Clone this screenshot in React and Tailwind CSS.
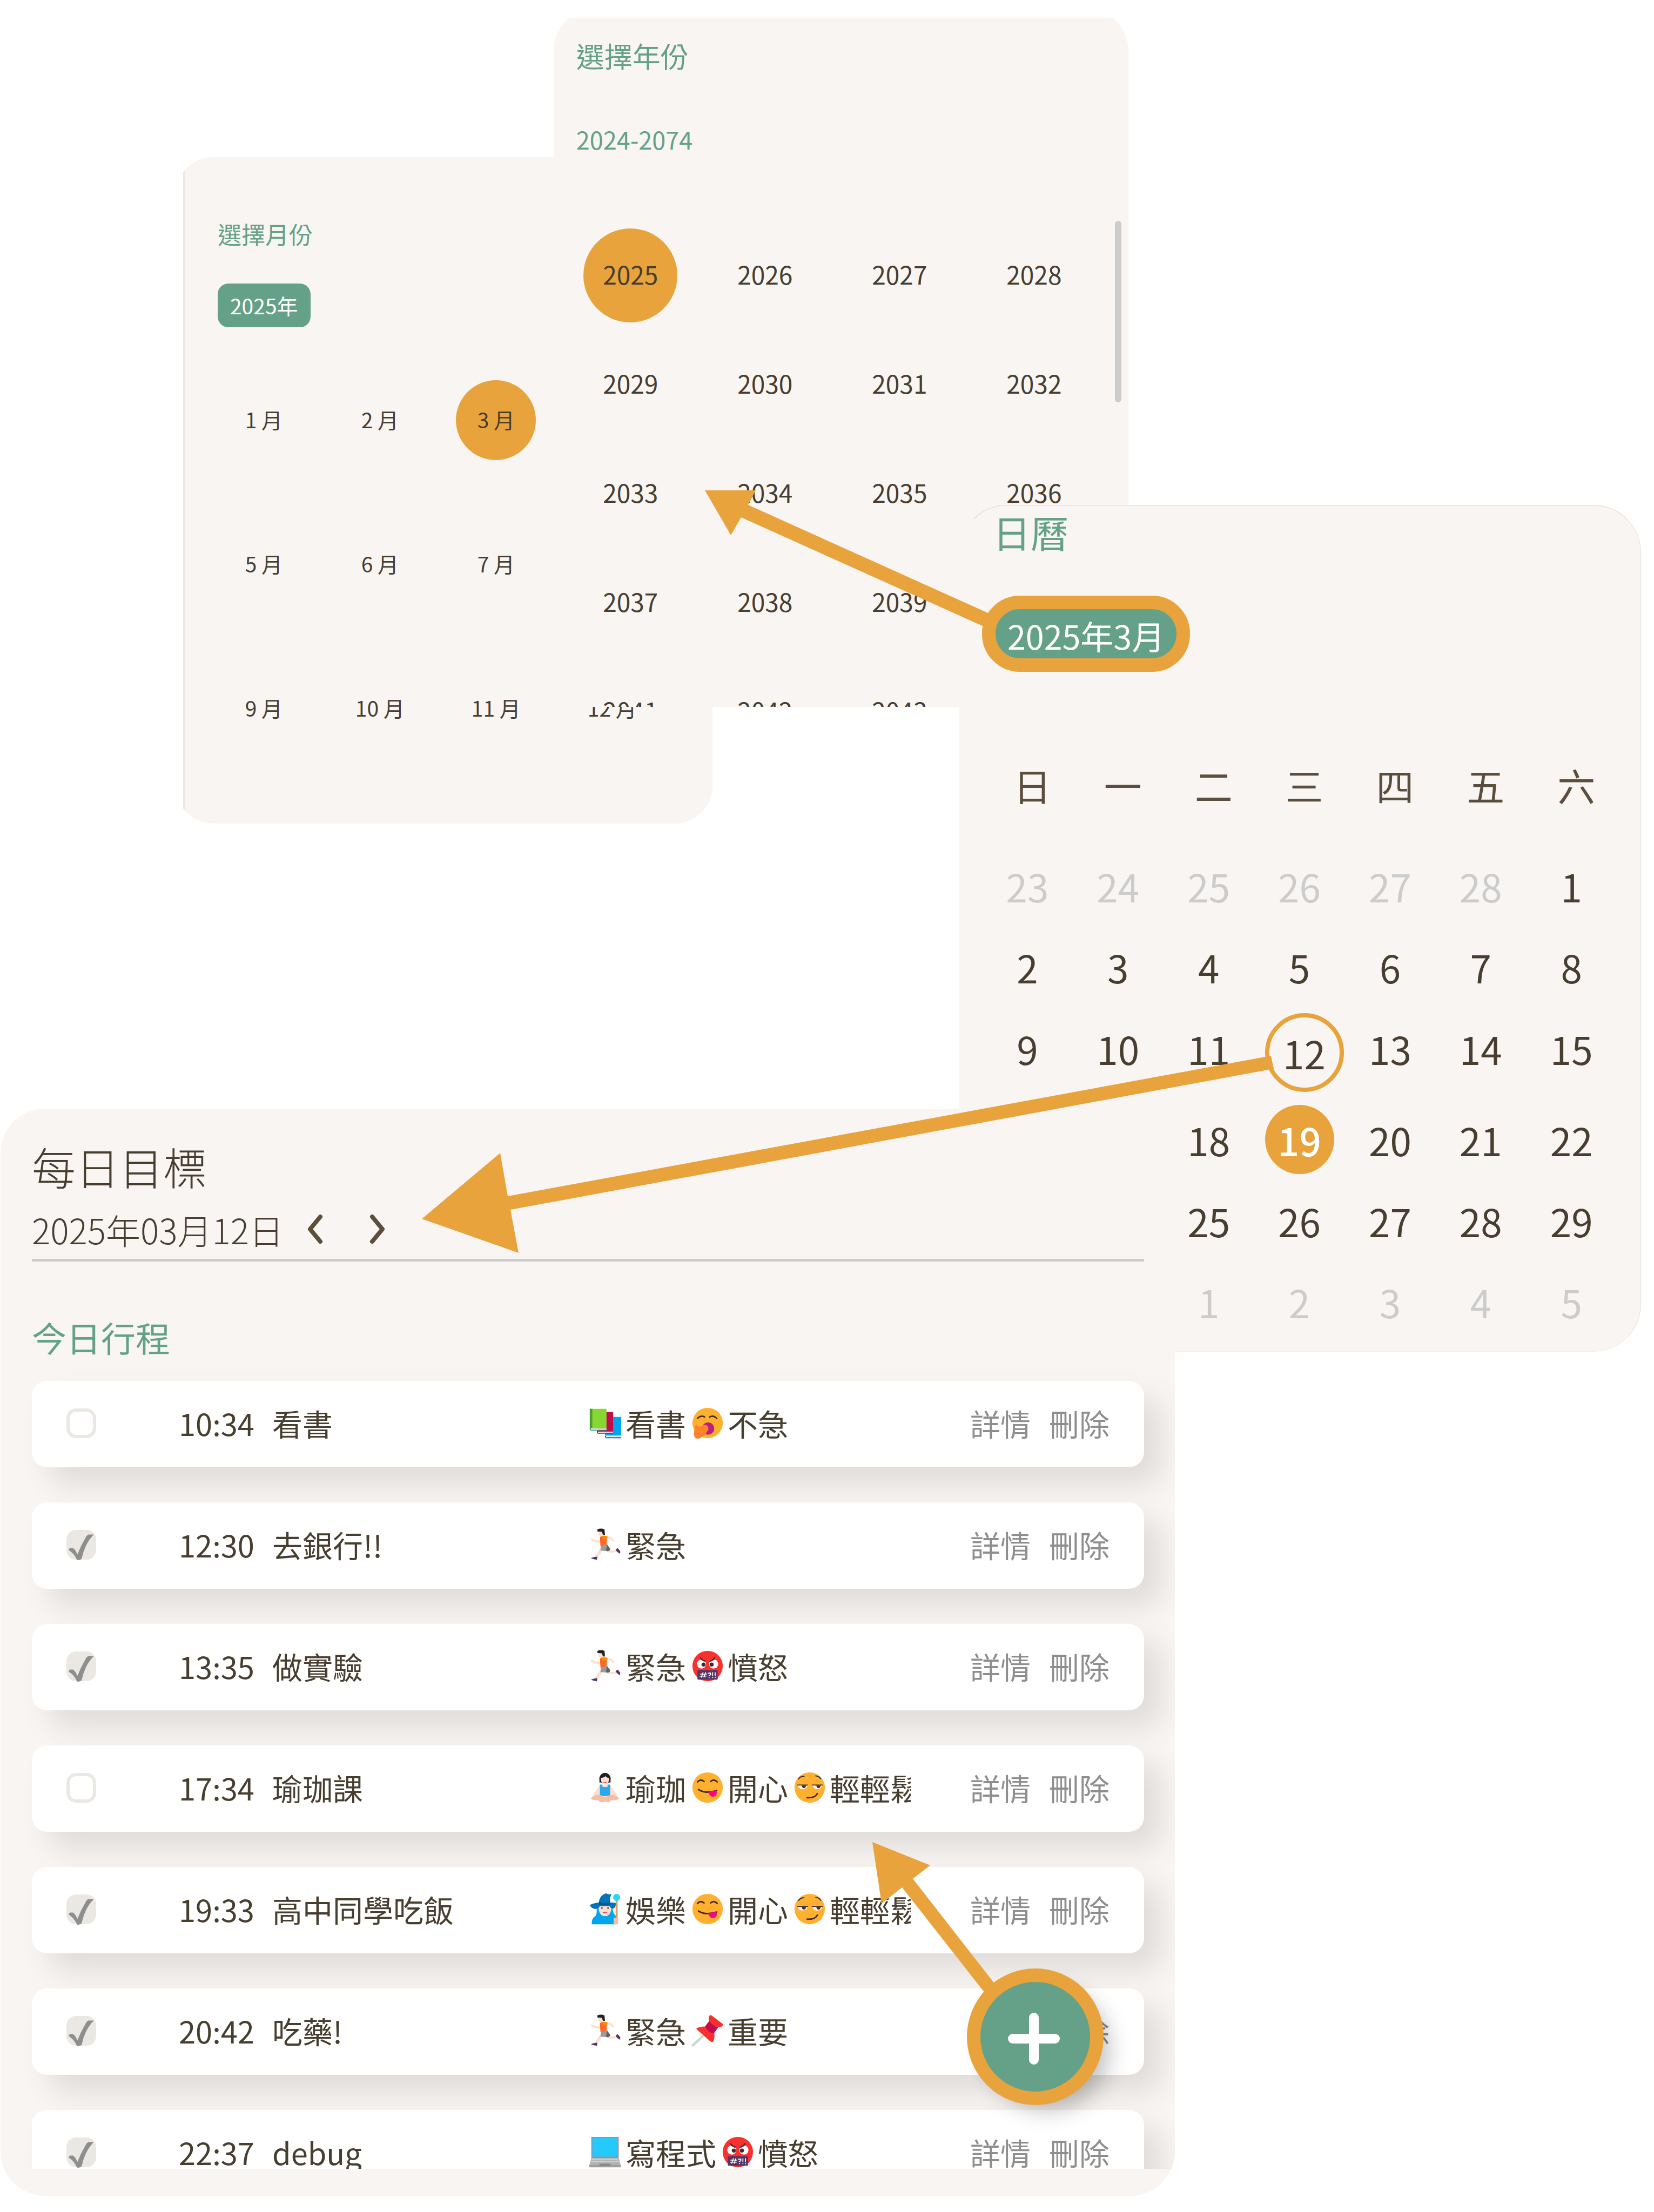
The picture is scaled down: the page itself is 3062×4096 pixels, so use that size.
import React from "react";

const FONT = "font-['Noto_Sans_CJK_TC','Noto_Sans',sans-serif]";

/* ---------- emoji drawings, all on a 64 x 64 grid ---------- */

function Emoji({ label, children }) {
  return (
    <svg viewBox="0 0 64 64" className="mr-2 ml-[9px] size-[60px] shrink-0" role="img" aria-label={label}>
      {children}
    </svg>
  );
}

function Books() {
  return (
    <Emoji label="書本">
      <path d="M32 20h32v36H32z" fill="#00A4EF" />
      <path d="M32 57h32v5H34q-3-2-2-5z" fill="#0F6CBD" />
      <path d="M34 57.500h30v2.500H34z" fill="#E6F1FA" />
      <path d="M17 10h31v38H17z" fill="#C30B4E" />
      <path d="M16 48h32v5H18q-3-2-2-5z" fill="#9B1B48" />
      <path d="M18 49h30v2.500H18z" fill="#F3DDE5" />
      <path d="M2 4h33v38H2z" fill="#86D72F" />
      <path d="M2 4h5v38H2z" fill="#4E9E2E" />
      <path d="M2 42h33v5H4q-3-2-2-5z" fill="#2F8F6B" />
      <path d="M4 42.500h31v3H4z" fill="#DDE8E0" />
    </Emoji>
  );
}

function Yawn() {
  return (
    <Emoji label="呵欠">
      <circle cx="33" cy="32" r="30" fill="#FFB02E" />
      <path d="M13 23q7-7 14-3M37 20q8-4 14 3" fill="none" stroke="#402A32" strokeWidth="3" strokeLinecap="round" />
      <circle cx="34" cy="43" r="12" fill="#BB1D80" />
      <path d="M9 37q2-5 4 1 6 2 10-1 8-3 10 1 4 6-1 11-3 7-9 9-8 8-15 3-4-8-1-14z" fill="#FF822D" />
    </Emoji>
  );
}

function Runner() {
  return (
    <Emoji label="跑步">
      <path d="M24 26q-9 1-18-4" fill="none" stroke="#FFDECC" strokeWidth="4" strokeLinecap="round" />
      <path d="M35 18q9-1 13 6" fill="none" stroke="#FFDECC" strokeWidth="4" strokeLinecap="round" />
      <path d="M25 41q-3 3-4 7l-7 9" fill="none" stroke="#FFDECC" strokeWidth="5.500" strokeLinecap="round" strokeLinejoin="round" />
      <path d="M38 45q8 2 18-1" fill="none" stroke="#FFDECC" strokeWidth="4.500" strokeLinecap="round" />
      <path d="M18 4h12v10q-6 4-11-1z" fill="#FFDECC" />
      <path d="M17 2q7-3 14 0l1 11h-4l-2-6-9-1z" fill="#212121" />
      <path d="M22 17q7-4 14 0l-1 18H23z" fill="#FF6723" />
      <path d="M25 16q9-3 13 1l-7 6z" fill="#FF8C00" />
      <path d="M24 34l12-2 6 8q0 5-5 5l-14-1z" fill="#9B9B9B" />
      <path d="M36 32l6 8q0 5-5 5l-3-1z" fill="#636363" />
      <path d="M53 42l4-3 5 6v5q-6-2-9-8z" fill="#533566" />
      <path d="M4 59q6-3 13-3l-1 6q-6 0-12-3z" fill="#533566" />
    </Emoji>
  );
}

function Cursing() {
  return (
    <Emoji label="憤怒">
      <circle cx="33" cy="32" r="30" fill="#F8312F" />
      <circle cx="21" cy="28" r="9" fill="#FFF" />
      <circle cx="45" cy="28" r="9" fill="#FFF" />
      <circle cx="25" cy="29" r="4" fill="#402A32" />
      <circle cx="41" cy="29" r="4" fill="#402A32" />
      <path d="M12 16l16 8q-3-6-11-9zM54 16l-16 8q3-6 11-9z" fill="#F8312F" />
      <path d="M19 16q5 6 9 6M47 16q-5 6-9 6" fill="none" stroke="#402A32" strokeWidth="2.500" strokeLinecap="round" />
      <rect x="13" y="40" width="40" height="19" rx="2" fill="#533566" />
      <path d="M21 54l3-9M26 54l3-9M19 48h12M18 52h12M34 46h5v3l-3 2M36 54v1M43 45v6M43 54v1M48 45v6M48 54v1" fill="none" stroke="#FFF" strokeWidth="1.800" strokeLinecap="round" />
    </Emoji>
  );
}

function Yoga() {
  return (
    <Emoji label="瑜珈">
      <path d="M21 27q-6 12-14 20 25 6 50 0-8-8-14-20z" fill="#FFDECC" />
      <path d="M4 54q4-8 16-8l12 5 12-5q12 0 16 8-6 4-16 3-4 6-10 3h-4q-8 3-11-3-9 1-15-3z" fill="#F4BFA3" />
      <circle cx="32" cy="14" r="11" fill="#212121" />
      <path d="M21 12h22v10H21z" fill="#212121" />
      <path d="M24 13q8-1 9-4 2 4 7 4 0 13-8 14-8-1-8-14z" fill="#FFDECC" />
      <path d="M29 21q3 3 6 0" fill="none" stroke="#C4506F" strokeWidth="1.500" />
      <path d="M22 26h5v5h10v-5h5v21q-10 4-20 0z" fill="#26A9F0" />
    </Emoji>
  );
}

function Yum() {
  return (
    <Emoji label="好吃">
      <circle cx="33" cy="32" r="30" fill="#FFB02E" />
      <path d="M13 21q6-7 13-1M39 20q7-6 13 1" fill="none" stroke="#402A32" strokeWidth="3" strokeLinecap="round" />
      <path d="M15 36q14 9 36 2" fill="none" stroke="#402A32" strokeWidth="3" strokeLinecap="round" />
      <path d="M34 41l16-4q4 10-5 13-7 1-11-9z" fill="#FF0085" />
    </Emoji>
  );
}

function Smirk() {
  return (
    <Emoji label="得意">
      <circle cx="33" cy="32" r="30" fill="#FFB02E" />
      <path d="M11 15q5-6 11-5M45 9q6 0 10 6" fill="none" stroke="#402A32" strokeWidth="2" strokeLinecap="round" />
      <path d="M9 28h20q-3 7-10 7T9 28zM38 28h20q-3 7-10 7t-10-7z" fill="#FFF" />
      <path d="M17 28h9q-1 5-4.500 5T17 28zM46 28h9q-1 5-4.500 5T46 28z" fill="#402A32" />
      <path d="M9 27h20M38 27h20" stroke="#402A32" strokeWidth="2" strokeLinecap="round" />
      <path d="M28 52q16 1 20-8" fill="none" stroke="#402A32" strokeWidth="3" strokeLinecap="round" />
    </Emoji>
  );
}

function Mage() {
  return (
    <Emoji label="魔法師">
      <path d="M6 62q-1-12 8-17 3-7 1-17h32q0 12 6 17 4 8 2 17z" fill="#00A6ED" />
      <path d="M19 25h26q0 21-13 21T19 25z" fill="#FFDECC" />
      <path d="M2 24q8-4 18-5 1-14 14-18 6 3 11 1-4 7-3 17l12 1q0 8-5 11-6 0-8-5-9 1-19 0-4 8-13 5-5-2-7-7z" fill="#0074BA" />
      <path d="M20 19q11 3 22 0v4q-11 3-22 0z" fill="#00508A" />
      <path d="M28 38q4 3 8 0" fill="none" stroke="#C4506F" strokeWidth="2" />
      <circle cx="26" cy="30" r="1.500" fill="#402A32" />
      <circle cx="38" cy="30" r="1.500" fill="#402A32" />
      <path d="M53 14h4v36h-4z" fill="#E39D5B" />
      <circle cx="55" cy="9" r="7" fill="#26D9F5" />
      <path d="M49 49h9v13h-9z" fill="#F4BFA3" />
    </Emoji>
  );
}

function Pin() {
  return (
    <Emoji label="圖釘">
      <path d="M4 61l22-20" stroke="#D3D3D3" strokeWidth="5" strokeLinecap="round" />
      <path d="M12 27q12-5 20-2l14 12q2 8-2 17-2 2-6-1L12 30q-2-2 0-3z" fill="#F8312F" />
      <path d="M28 24l9-12 18 12-10 14q-11-2-17-14z" fill="#C30B4E" />
      <path d="M36 4q2-4 6-1l21 16q1 3-2 5-7 2-12 1L37 15q-3-4-1-11z" fill="#F8312F" />
    </Emoji>
  );
}

function Laptop() {
  return (
    <Emoji label="筆電">
      <path d="M5 2h54v42H5z" fill="#998EA4" />
      <path d="M7 4h50v37H7z" fill="#26C9FC" />
      <path d="M5 44h54l4 14H1z" fill="#B4B4B4" />
      <path d="M6 47h52M5 51h54" stroke="#D8D8D8" strokeWidth="2" strokeDasharray="3 1" />
      <path d="M1 57h62v5H1z" fill="#A0A0A0" />
      <path d="M21 55h22v4H21z" fill="#868686" />
    </Emoji>
  );
}

/* ---------- data ---------- */

const MONTHS = Array.from({ length: 12 }, (_, i) => i + 1);
const YEARS = Array.from({ length: 20 }, (_, i) => 2025 + i);
const WEEKDAYS = ["日", "一", "二", "三", "四", "五", "六"];
const WEEKS = [
  [23, 24, 25, 26, 27, 28, 1],
  [2, 3, 4, 5, 6, 7, 8],
  [9, 10, 11, 12, 13, 14, 15],
  [16, 17, 18, 19, 20, 21, 22],
  [23, 24, 25, 26, 27, 28, 29],
  [30, 31, 1, 2, 3, 4, 5],
];

const TASKS = [
  { time: "10:34", title: "看書", done: false, tags: [[Books, "看書"], [Yawn, "不急"]] },
  { time: "12:30", title: "去銀行!!", done: true, tags: [[Runner, "緊急"]] },
  { time: "13:35", title: "做實驗", done: true, tags: [[Runner, "緊急"], [Cursing, "憤怒"]] },
  { time: "17:34", title: "瑜珈課", done: false, tags: [[Yoga, "瑜珈"], [Yum, "開心"], [Smirk, "輕輕鬆鬆"]] },
  { time: "19:33", title: "高中同學吃飯", done: true, tags: [[Mage, "娛樂"], [Yum, "開心"], [Smirk, "輕輕鬆鬆"]] },
  { time: "20:42", title: "吃藥!", done: true, tags: [[Runner, "緊急"], [Pin, "重要"]] },
  { time: "22:37", title: "debug", done: true, tags: [[Laptop, "寫程式"], [Cursing, "憤怒"]] },
];

/* ---------- panels ---------- */

function MonthPicker() {
  return (
    <section className="mt-[291px] ml-[11.07%] w-[32%] self-start overflow-hidden [grid-area:1/1]">
      <div className="-ml-[14px] overflow-hidden rounded-[70px] bg-[#f9f5f2]">
        <div className="ml-[14px] border-l-4 border-[#ebe8e6] pt-[114px] pb-20">
          <h2 className="ml-[60px] text-[44px] leading-[56px] text-[#64a188]">選擇月份</h2>
          <button type="button" className="mt-16 ml-[60px] block rounded-[20px] bg-[#64a188] px-[23px] text-[39px] leading-[81px] text-white">
            2025年
          </button>
          <div className="mt-[38px] mr-[78px] ml-[38px] grid grid-cols-4">
            {MONTHS.map((m) => (
              <div key={m} className="flex h-[267px] items-center justify-center">
                <button
                  type="button"
                  className={
                    m === 3
                      ? "size-[148px] rounded-full bg-[#e8a33d] pb-0.5 text-[39px] text-[#473e2f]"
                      : "size-[148px] rounded-full pb-0.5 text-[39px] text-[#473e2f]"
                  }
                >
                  {m} 月
                </button>
              </div>
            ))}
          </div>
        </div>
      </div>
    </section>
  );
}

function YearPicker() {
  return (
    <section className="relative mt-[33px] ml-[33.47%] h-[1276px] w-[34.75%] self-start overflow-hidden [grid-area:1/1]">
      <div className="-mt-4 rounded-[76px] bg-[#f9f5f2] pt-[54px]">
        <h2 className="ml-[42px] text-[52px] leading-[64px] text-[#64a188]">選擇年份</h2>
        <p className="mt-[93px] ml-[42px] text-[45px] leading-[60px] text-[#64a188]">2024-2074</p>
        <div className="mt-[121px] mr-[50px] ml-[18px] grid grid-cols-4">
          {YEARS.map((y) => (
            <div key={y} className="flex h-[202px] items-center justify-center">
              <button
                type="button"
                className={
                  y === 2025
                    ? "size-[174px] rounded-full bg-[#e8a33d] pb-1.5 text-[46px] text-[#473e2f]"
                    : "size-[174px] rounded-full pb-1.5 text-[46px] text-[#473e2f]"
                }
              >
                {y}
              </button>
            </div>
          ))}
        </div>
      </div>
      <div className="absolute top-[376px] right-[13px] h-[336px] w-3 rounded-full bg-[#cccccc]" />
    </section>
  );
}

function DayCell({ day, week }) {
  const outside = (week === 0 && day > 7) || (week === 5 && day < 20);
  if (week === 2 && day === 12) {
    return (
      <td className="h-[170px] pl-[18px] align-top">
        <button type="button" className="mx-auto mt-[11px] block size-[146px] rounded-full border-8 border-[#e8a33d] text-[71px] leading-none text-[#473e2f]">
          12
        </button>
      </td>
    );
  }
  if (week === 2) {
    return (
      <td className="h-[170px] align-top">
        <button type="button" className="mx-auto block text-[71px] leading-[153px] text-[#473e2f]">
          {day}
        </button>
      </td>
    );
  }
  if (week === 3 && day === 19) {
    return (
      <td className="h-[150px] align-middle">
        <button type="button" className="mx-auto block size-32 rounded-full bg-[#e8a33d] text-[71px] leading-none font-medium text-white">
          19
        </button>
      </td>
    );
  }
  return (
    <td className="h-[150px] align-middle">
      <button
        type="button"
        className={
          outside
            ? "mx-auto block text-[71px] leading-[128px] text-[#cccccc]"
            : "mx-auto block text-[71px] leading-[128px] text-[#473e2f]"
        }
      >
        {day}
      </button>
    </td>
  );
}

function Calendar() {
  return (
    <section className="relative mt-[935px] ml-[58%] w-[41.22%] self-start rounded-[88px] border border-t-[#ecccca] border-r-[#e9e2df] border-b-[#f6ebe8] border-l-[#f9f5f2] bg-[#f9f5f2] pt-[7px] pb-[17px] [grid-area:1/1]">
      <h2 className="ml-[61px] text-[70px] leading-[84px] text-[#64a188]">日曆</h2>
      <button
        type="button"
        className="mt-[76px] ml-[41px] block rounded-[70px] border-[25px] border-[#e8a33d] bg-[#64a188] px-[22px] pt-[7px] text-[61px] leading-[84px] text-white"
      >
        2025年3月
      </button>
      <div className="mt-[98px] mr-11 ml-[41px]">
        <table className="w-full table-fixed border-collapse">
          <thead>
            <tr>
              {WEEKDAYS.map((d) => (
                <th key={d} scope="col" className="h-[223px] p-0 pl-[18px] text-[70px] leading-none font-normal text-[#5b4e3c]">
                  {d}
                </th>
              ))}
            </tr>
          </thead>
          <tbody>
            {WEEKS.map((week, w) => (
              <tr key={w}>
                {week.map((day) => (
                  <DayCell key={day} day={day} week={w} />
                ))}
              </tr>
            ))}
          </tbody>
        </table>
      </div>
    </section>
  );
}

function Check({ checked, label }) {
  return (
    <label className="relative block size-[55px]">
      <input
        type="checkbox"
        defaultChecked={checked}
        aria-label={label}
        className="peer block size-[55px] appearance-none rounded-[18px] border-[6px] border-[#ebe8e3] bg-white checked:bg-[#ebe8e3]"
      />
      <svg viewBox="0 0 64 66" className="pointer-events-none absolute inset-0 hidden w-full peer-checked:block" aria-hidden="true">
        <path
          d="M5 43q1-4 4-4h5q6 4 9 13h1q7-18 16-33 3-7 7-9h12q-10 10-17 24-6 13-9 27-1 3-4 3-5 3-7-1-4-9-12-16-3-1-5-4z"
          fill="#8e8e8e"
        />
      </svg>
    </label>
  );
}

function TaskRow({ task }) {
  return (
    <li className="grid h-40 grid-cols-[208px_173px_minmax(0,1fr)_605px_368px] items-center rounded-[28px] bg-white px-16 pb-1 text-[56px] leading-[84px] text-[#473e2f] shadow-[32px_32px_54px_rgba(0,0,0,0.1)]">
      <Check checked={task.done} label={task.title} />
      <span>{task.time}</span>
      <span className="truncate">{task.title}</span>
      <div className="flex items-center overflow-hidden whitespace-nowrap">
        {task.tags.map(([Icon, text], i) => (
          <span key={i} className="flex shrink-0 items-center">
            <Icon />
            {text}
          </span>
        ))}
      </div>
      <div className="flex justify-end gap-[34px] text-[#8e8e8e]">
        <button type="button">詳情</button>
        <button type="button">刪除</button>
      </div>
    </li>
  );
}

function Chevron({ d, label }) {
  return (
    <button type="button" aria-label={label} className="flex h-20 w-[116px] items-center justify-center">
      <svg viewBox="0 0 32 56" className="h-14 w-8" aria-hidden="true">
        <path d={d} fill="none" stroke="#5b4e3c" strokeWidth="8" strokeLinecap="round" strokeLinejoin="round" />
      </svg>
    </button>
  );
}

function Daily() {
  return (
    <section className="relative mt-[2053px] ml-px w-[71%] self-start overflow-hidden rounded-[82px] bg-[#f9f5f2] pt-[58px] pb-[50px] [grid-area:1/1]">
      <header className="mr-[57px] ml-[58px] border-b-[5px] border-[#cccccc] pb-[15px]">
        <h1 className="text-[81px] leading-[96px] font-light text-[#473e2f]">每日目標</h1>
        <div className="mt-[29px] flex items-center text-[64px] leading-[80px] font-light text-[#473e2f]">
          <span>2025年03月12日</span>
          <Chevron label="前一天" d="M26 5L7 28L26 51" />
          <Chevron label="後一天" d="M6 5L25 28L6 51" />
        </div>
      </header>
      <h2 className="mt-[99px] ml-[58px] text-[64px] leading-[80px] text-[#64a188]">今日行程</h2>
      <div className="h-[1501px] overflow-hidden">
        <ul className="mr-[57px] ml-[58px] flex flex-col gap-[65px] pt-[42px]">
          {TASKS.map((t) => (
            <TaskRow key={t.time} task={t} />
          ))}
        </ul>
      </div>
      <button
        type="button"
        aria-label="新增行程"
        className="absolute right-[132px] bottom-[168px] flex size-[253px] items-center justify-center rounded-full border-[25px] border-[#e8a33d] bg-[#64a188] shadow-[22px_22px_40px_-12px_rgba(0,0,0,0.25)]"
      >
        <svg viewBox="0 0 203 203" className="size-[203px]" aria-hidden="true">
          <path d="M60 105H138M99 66V144" stroke="#fff" strokeWidth="18" strokeLinecap="round" />
        </svg>
      </button>
    </section>
  );
}

function Arrows() {
  return (
    <svg viewBox="0 0 3062 4096" className="pointer-events-none relative w-full self-start [grid-area:1/1]" fill="#e8a33d" aria-hidden="true">
      <path d="M1305 908H1399L1385 935L1831 1136L1821 1160L1372 958L1353 991Z" />
      <path d="M781 2257L926 2135L940 2215L2353 1955L2358 1979L945 2240L960 2320Z" />
      <path d="M1615 3411L1722 3454L1690 3479L1842 3674L1823 3690L1670 3495L1632 3525Z" />
    </svg>
  );
}

export default function App() {
  return (
    <main lang="zh-Hant" className={"grid w-full grid-cols-1 overflow-hidden bg-white " + FONT}>
      <MonthPicker />
      <YearPicker />
      <Calendar />
      <Daily />
      <Arrows />
    </main>
  );
}
